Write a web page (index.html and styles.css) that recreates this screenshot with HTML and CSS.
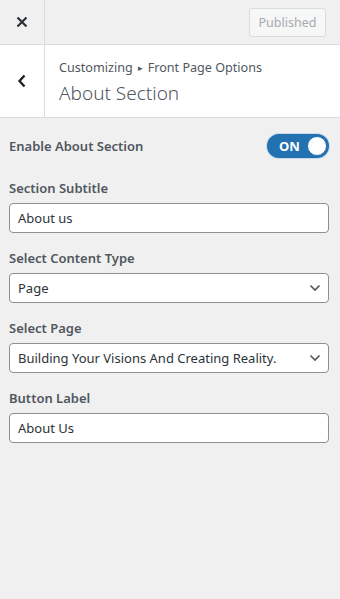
FILE: index.html
```html
<!DOCTYPE html>
<html>
<head>
<meta charset="utf-8">
<link rel="stylesheet" href="styles.css">
</head>
<body>
<div class="topbar">
  <div class="close">
    <svg width="12" height="12" viewBox="0 0 12 12"><path d="M1.5 1.5 L10.5 10.5 M10.5 1.5 L1.5 10.5" stroke="#2c3338" stroke-width="2.2" stroke-linecap="butt"/></svg>
  </div>
  <div class="topbar-right">
    <button class="published">Published</button>
  </div>
</div>
<div class="header">
  <div class="back">
    <svg width="10" height="14" viewBox="0 0 10 14"><path d="M7.5 1.5 L2.5 7 L7.5 12.5" stroke="#1d2327" stroke-width="2.4" fill="none"/></svg>
  </div>
  <div class="titles">
    <div class="crumb">Customizing<span class="arrow">▸</span>Front Page Options</div>
    <div class="title">About Section</div>
  </div>
</div>
<div class="content">
  <div class="row-toggle">
    <span class="label">Enable About Section</span>
    <span class="toggle"><span class="on">ON</span><span class="knob"></span></span>
  </div>
  <div class="field">
    <div class="label">Section Subtitle</div>
    <div class="input">About us</div>
  </div>
  <div class="field">
    <div class="label">Select Content Type</div>
    <div class="input select">Page<svg class="chev" width="12" height="8" viewBox="0 0 12 8"><path d="M1.5 1.5 L6 6 L10.5 1.5" stroke="#50575e" stroke-width="1.6" fill="none"/></svg></div>
  </div>
  <div class="field">
    <div class="label">Select Page</div>
    <div class="input select">Building Your Visions And Creating Reality.<svg class="chev" width="12" height="8" viewBox="0 0 12 8"><path d="M1.5 1.5 L6 6 L10.5 1.5" stroke="#50575e" stroke-width="1.6" fill="none"/></svg></div>
  </div>
  <div class="field">
    <div class="label">Button Label</div>
    <div class="input">About Us</div>
  </div>
</div>
</body>
</html>
```
FILE: styles.css
```css
* { box-sizing: border-box; }
html, body { margin: 0; padding: 0; }
body {
  width: 340px;
  height: 599px;
  background: #f0f0f1;
  font-family: "Noto Sans", "Open Sans", sans-serif;
  color: #50575e;
  overflow: hidden;
}
.topbar {
  display: flex;
  height: 45px;
  border-bottom: 1px solid #dcdcde;
}
.close {
  width: 45px;
  border-right: 1px solid #dcdcde;
  display: flex;
  align-items: center;
  justify-content: center;
}
.topbar-right {
  flex: 1;
  display: flex;
  justify-content: flex-end;
  align-items: flex-start;
  padding: 8px 14px 0 0;
}
.published {
  width: 77px;
  height: 29px;
  border: 1px solid #dcdcde;
  border-radius: 3px;
  background: #f6f7f7;
  color: #a7aaad;
  font-family: inherit;
  font-size: 12.5px;
  padding: 0;
}
.header {
  display: flex;
  height: 73px;
  background: #fff;
  border-bottom: 1px solid #dcdcde;
}
.back {
  width: 45px;
  border-right: 1px solid #dcdcde;
  display: flex;
  align-items: center;
  justify-content: center;
}
.titles {
  padding: 13px 0 0 14px;
}
.crumb {
  font-size: 12.6px;
  line-height: 20px;
  color: #50575e;
}
.arrow { font-size: 9px; position: relative; top: -1px; margin: 0 5px 0 5px; }
.title {
  font-size: 19px;
  font-weight: 300;
  line-height: 28px;
  color: #50575e;
  margin-top: 0;
}
.content {
  padding: 16px 11px 0 9px;
}
.label {
  font-size: 13px;
  font-weight: 600;
  color: #50575e;
  line-height: 20px;
}
.row-toggle {
  display: flex;
  justify-content: space-between;
  align-items: center;
  height: 24px;
  margin-bottom: 20px;
}
.toggle {
  width: 62px;
  height: 24px;
  background: #2271b1;
  border-radius: 12px;
  display: flex;
  align-items: center;
  justify-content: space-between;
  padding: 0 2px 0 12px;
  box-shadow: 0 0 0 1px #c5d9ec;
}
.on {
  color: #fff;
  font-weight: 700;
  font-size: 13px;
}
.knob {
  width: 20px;
  height: 20px;
  border-radius: 50%;
  background: #fff;
  border: 1px solid #2271b1;
}
.field { margin-bottom: 15px; }
.field .label { margin-bottom: 5px; }
.input {
  height: 30px;
  border: 1px solid #8c8f94;
  border-radius: 4px;
  background: #fff;
  font-size: 13px;
  color: #2c3338;
  padding: 0 8px;
  display: flex;
  align-items: center;
  justify-content: space-between;
}
.chev { flex: none; margin-right: -1px; }
```
